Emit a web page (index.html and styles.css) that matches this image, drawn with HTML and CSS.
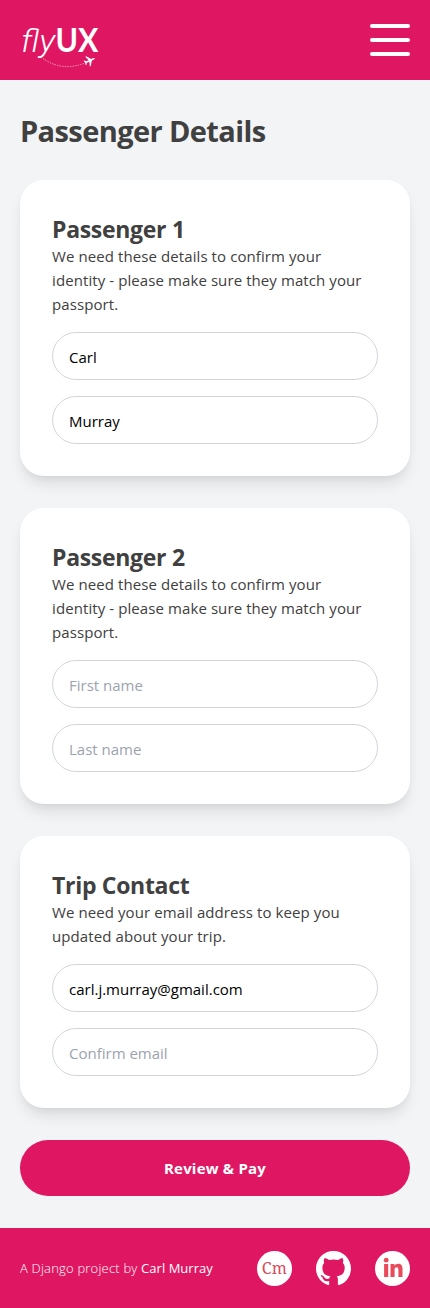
FILE: index.html
```html
<!DOCTYPE html>
<html lang="en">
<head>
<meta charset="utf-8">
<meta name="viewport" content="width=device-width, initial-scale=1">
<title>flyUX</title>
<link rel="stylesheet" href="styles.css">
</head>
<body>
<header class="header">
  <a class="logo" aria-label="flyUX">
    <svg width="80" height="48" viewBox="0 0 80 48">
      <text class="logo-fly" x="1" y="32" textLength="34" lengthAdjust="spacingAndGlyphs">fly</text>
      <text class="logo-ux" x="35.500" y="32" textLength="43" lengthAdjust="spacingAndGlyphs">UX</text>
      <path d="M23 38.500Q42 52 65 43" fill="none" stroke="#fff" stroke-opacity=".65" stroke-width=".8" stroke-dasharray="1.600 1"/>
      <path transform="translate(70 40.500) rotate(65) scale(.54)" fill="#fff" d="M0-10Q1.500-9 1.500-5.500V-3L10 3V5L1.500 2V7L4.500 9.500V11L0 9.800-4.500 11V9.500L-1.500 7V2L-10 5V3L-1.500-3V-5.500Q-1.500-9 0-10Z"/>
    </svg>
  </a>
  <button class="menu" aria-label="Menu"><span class="bar"></span><span class="bar"></span><span class="bar"></span></button>
</header>
<main class="main">
  <h1 class="title">Passenger Details</h1>
  <form class="form">
    <section class="card">
      <h2 class="heading">Passenger 1</h2>
      <p class="copy">We need these details to confirm your<br>identity - please make sure they match your<br>passport.</p>
      <input class="field" type="text" placeholder="First name" value="Carl">
      <input class="field" type="text" placeholder="Last name" value="Murray">
    </section>
    <section class="card">
      <h2 class="heading">Passenger 2</h2>
      <p class="copy">We need these details to confirm your<br>identity - please make sure they match your<br>passport.</p>
      <input class="field" type="text" placeholder="First name">
      <input class="field" type="text" placeholder="Last name">
    </section>
    <section class="card">
      <h2 class="heading">Trip Contact</h2>
      <p class="copy">We need your email address to keep you<br>updated about your trip.</p>
      <input class="field" type="text" placeholder="Email" value="carl.j.murray@gmail.com">
      <input class="field" type="text" placeholder="Confirm email">
    </section>
    <button class="submit" type="button">Review &amp; Pay</button>
  </form>
</main>
<footer class="footer">
  <p class="credit">A Django project by <span class="author">Carl Murray</span></p>
  <nav class="social">
    <a class="social-link" aria-label="Website"><svg width="35" height="35" viewBox="0 0 35 35"><circle cx="17.500" cy="17.500" r="17.500" fill="#fff"/><text class="cm" x="4.800" y="23" textLength="25" lengthAdjust="spacingAndGlyphs">Cm</text></svg></a>
    <a class="social-link" aria-label="GitHub"><svg width="35" height="35" viewBox="0 0 16 16"><path fill="#fff" d="M8 0C3.580 0 0 3.580 0 8c0 3.540 2.290 6.530 5.470 7.590.4.070.55-.17.55-.38 0-.19-.01-.82-.01-1.490-2.010.37-2.530-.49-2.690-.94-.09-.23-.48-.94-.82-1.130-.28-.15-.68-.52-.01-.53.63-.01 1.080.58 1.230.82.72 1.210 1.870.87 2.330.66.07-.52.28-.87.51-1.070-1.780-.2-3.640-.89-3.640-3.950 0-.87.31-1.590.82-2.150-.08-.2-.36-1.020.08-2.120 0 0 .67-.21 2.200.82.64-.18 1.320-.27 2-.27s1.360.09 2 .27c1.530-1.040 2.200-.82 2.200-.82.44 1.100.16 1.920.08 2.120.51.56.82 1.270.82 2.150 0 3.070-1.870 3.750-3.650 3.950.29.25.54.73.54 1.480 0 1.070-.01 1.930-.01 2.200 0 .21.15.46.55.38A8.010 8.010 0 0 0 16 8c0-4.420-3.580-8-8-8Z"/></svg></a>
    <a class="social-link" aria-label="LinkedIn"><svg width="35" height="35" viewBox="0 0 35 35"><circle cx="17.500" cy="17.500" r="17.500" fill="#fff"/><g fill="#e94b5c"><circle cx="11.200" cy="9.200" r="2.400"/><path d="M9.100 13H13.200V26H9.100ZM15.500 13H19.400V14.800C20.200 13.500 21.500 12.700 23.300 12.700 26.500 12.700 27.500 14.900 27.500 18V26H23.400V18.900C23.400 17.300 23 16.200 21.600 16.200 20.100 16.200 19.600 17.300 19.600 18.900V26H15.500Z"/></g></svg></a>
  </nav>
</footer>
</body>
</html>
```
FILE: styles.css
```css
* { box-sizing: border-box; margin: 0; }
body { background: #f3f4f6; color: #404040; font: 15px/24px "Open Sans", "Noto Sans", sans-serif; }
.header { display: flex; align-items: center; justify-content: space-between; height: 80px; padding: 0 20px; background: #df1662; }
.logo { display: flex; margin-top: 8px; }
.logo svg { overflow: visible; }
.logo-fly { font: italic 300 32px Roboto, sans-serif; fill: #fff; }
.logo-ux { font: 700 33px Lato, sans-serif; fill: #fff; }
.menu { display: flex; flex-direction: column; gap: 10px; width: 40px; padding: 0; border: 0; background: none; }
.bar { height: 4px; border-radius: 2px; background: #fff; }
.main { padding: 32px 20px; }
.title { margin-bottom: 32px; padding-top: 2px; font-size: 29px; line-height: 34px; font-weight: 700; letter-spacing: -.6px; }
.form { display: flex; flex-direction: column; gap: 32px; }
.card { display: flex; flex-direction: column; padding: 32px; border-radius: 24px; background: #fff; box-shadow: 0 10px 15px -3px rgba(0,0,0,.1), 0 4px 6px -2px rgba(0,0,0,.05); }
.heading { padding-top: 2px; font-size: 23px; line-height: 30px; font-weight: 700; letter-spacing: -.3px; }
.copy { letter-spacing: .09px; white-space: nowrap; }
.field { width: 100%; height: 48px; margin-top: 16px; padding: 1px 16px 0; border: 1px solid #d1d5db; border-radius: 24px; background: #fff; color: #000; font: inherit; outline: 0; }
.field::placeholder { color: #9ca3af; opacity: 1; }
.submit { height: 56px; border: 0; border-radius: 28px; background: #df1662; color: #fff; font: 700 15px/24px "Open Sans", sans-serif; letter-spacing: .2px; }
.footer { display: flex; align-items: center; justify-content: space-between; height: 80px; padding: 0 20px; background: #df1662; color: #fff; }
.credit { font-size: 13px; line-height: 20px; font-weight: 300; letter-spacing: .2px; white-space: nowrap; }
.author { font-weight: 400; letter-spacing: .03px; }
.social { display: flex; gap: 24px; }
.social-link { display: flex; }
.cm { font: 16.5px "Noto Serif", "Liberation Serif", serif; fill: #d94a5c; }
```
